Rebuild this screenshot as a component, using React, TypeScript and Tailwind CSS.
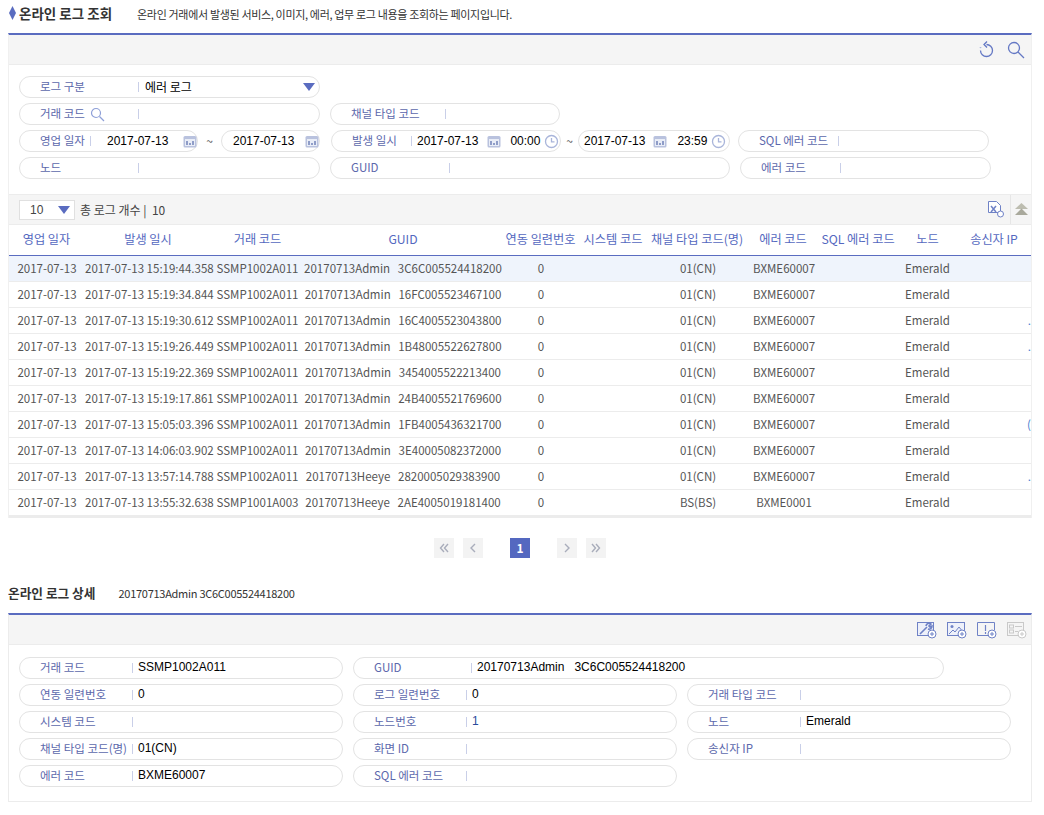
const KR = "font-['Noto_Sans_CJK_KR','Noto_Sans',sans-serif]";
const ARIAL = "font-['Liberation_Sans','Noto_Sans_CJK_KR',sans-serif]";

const rows = [
  ['2017-07-13 15:19:44.358', 'SSMP1002A011', '20170713Admin   3C6C005524418200', '01(CN)', 'BXME60007', ''],
  ['2017-07-13 15:19:34.844', 'SSMP1002A011', '20170713Admin   16FC005523467100', '01(CN)', 'BXME60007', ''],
  ['2017-07-13 15:19:30.612', 'SSMP1002A011', '20170713Admin   16C4005523043800', '01(CN)', 'BXME60007', '.'],
  ['2017-07-13 15:19:26.449', 'SSMP1002A011', '20170713Admin   1B48005522627800', '01(CN)', 'BXME60007', '.'],
  ['2017-07-13 15:19:22.369', 'SSMP1002A011', '20170713Admin   3454005522213400', '01(CN)', 'BXME60007', ''],
  ['2017-07-13 15:19:17.861', 'SSMP1002A011', '20170713Admin   24B4005521769600', '01(CN)', 'BXME60007', ''],
  ['2017-07-13 15:05:03.396', 'SSMP1002A011', '20170713Admin   1FB4005436321700', '01(CN)', 'BXME60007', '('],
  ['2017-07-13 14:06:03.902', 'SSMP1002A011', '20170713Admin   3E40005082372000', '01(CN)', 'BXME60007', ''],
  ['2017-07-13 13:57:14.788', 'SSMP1002A011', '20170713Heeye   2820005029383900', '01(CN)', 'BXME60007', '.'],
  ['2017-07-13 13:55:32.638', 'SSMP1001A003', '20170713Heeye   2AE4005019181400', 'BS(BS)', 'BXME0001', ''],
];

const heads: [string, string][] = [
  ['영업 일자', 'w-[75px]'],
  ['발생 일시', 'w-[128px]'],
  ['거래 코드', 'w-[91px]'],
  ['GUID', 'w-[200px]'],
  ['연동 일련번호', 'w-[75px]'],
  ['시스템 코드', 'w-[70px]'],
  ['채널 타입 코드(명)', 'w-[98px]'],
  ['에러 코드', 'w-[74px]'],
  ['SQL 에러 코드', 'w-[76px]'],
  ['노드', 'w-[63px]'],
  ['송신자 IP', 'w-[70px]'],
];

function Calendar() {
  return (
    <svg width="14" height="13" viewBox="0 0 14 13" className="shrink-0">
      <rect x="0.5" y="1" width="13" height="11.5" rx="1.5" fill="#b9c2de" />
      <rect x="2" y="4" width="10" height="7" fill="#e9edf7" />
      <rect x="3" y="6" width="2" height="4" fill="#8f9dc8" />
      <rect x="6" y="8" width="2" height="2" fill="#8f9dc8" />
      <rect x="9" y="6" width="2" height="4" fill="#8f9dc8" />
    </svg>
  );
}

function Clock() {
  return (
    <svg width="15" height="15" viewBox="0 0 15 15" className="shrink-0" fill="none" stroke="#a9b5da" strokeWidth="1.3">
      <circle cx="7.5" cy="7.5" r="6" />
      <path d="M7.5 4v3.8h3" />
    </svg>
  );
}

function Pill({ label, value, w, bar, blue, labelIcon, children }: { label: string; value?: string; w: string; bar: string; blue?: boolean; labelIcon?: React.ReactNode; children?: React.ReactNode }) {
  return (
    <div className={`${w} h-[22px] shrink-0 flex items-center rounded-full border border-[#e3e3e3] bg-white pl-[20px]`}>
      <span className={`${bar} shrink-0 flex items-center whitespace-nowrap text-[11.5px] text-[#5c68ac] ${KR}`}>
        {label}
        {labelIcon}
      </span>
      <span className="w-px h-[10px] bg-[#c9cfe8] shrink-0" />
      {value !== undefined && (
        <span className={`pl-[5px] mb-[2px] text-xs whitespace-pre ${blue ? 'text-[#2a4a9c]' : 'text-black'} ${ARIAL}`}>{value}</span>
      )}
      {children}
    </div>
  );
}

function Diamond() {
  return (
    <svg width="7" height="14" viewBox="0 0 7 14" className="shrink-0 mt-[1px] ml-px">
      <path d="M3.5 0 7 7l-3.5 7L0 7z" fill="#5a6cc0" />
    </svg>
  );
}

function PlusBadge({ cx, cy, color }: { cx: number; cy: number; color: string }) {
  return (
    <g>
      <circle cx={cx} cy={cy} r="4" fill="#fff" stroke={color} strokeWidth="1" />
      <path d={`M${cx - 2} ${cy}h4M${cx} ${cy - 2}v4`} stroke={color} strokeWidth="1" />
    </g>
  );
}

function DetailIcons() {
  const c = '#6f82c6';
  const g = '#c9c9c9';
  return (
    <div className="flex items-center gap-[10px]">
      <svg width="20" height="18" viewBox="0 0 20 18" fill="none">
        <rect x="0.5" y="1.5" width="16" height="13" stroke={c} fill="#eef1fa" />
        <path d="M3 13l7-7M9 5a3 3 0 0 1 5-2l-2 2 1 1 2-1a3 3 0 0 1-4 3" stroke={c} strokeWidth="1.6" />
        <PlusBadge cx={15} cy={13} color={c} />
      </svg>
      <svg width="20" height="18" viewBox="0 0 20 18" fill="none">
        <rect x="0.5" y="1.5" width="17" height="13" stroke={c} fill="#eef1fa" />
        <circle cx="5" cy="5.5" r="1.5" fill={c} />
        <path d="M2 13l4-4 2 2 4-5 4 5" stroke={c} />
        <PlusBadge cx={15} cy={13} color={c} />
      </svg>
      <svg width="20" height="18" viewBox="0 0 20 18" fill="none">
        <path d="M11 14.5H.5v-13h17V9" stroke={c} />
        <path d="M8.5 4v6M8.5 11v2" stroke={c} strokeWidth="1.2" />
        <PlusBadge cx={15} cy={13} color={c} />
      </svg>
      <svg width="20" height="18" viewBox="0 0 20 18" fill="none">
        <rect x="0.5" y="1.5" width="16" height="13" stroke={g} fill="#f5f5f5" />
        <rect x="2.5" y="4" width="4" height="3" stroke={g} />
        <rect x="2.5" y="9" width="4" height="3" stroke={g} />
        <path d="M8 5.5h7M8 10.5h3" stroke={g} />
        <PlusBadge cx={15} cy={13} color={g} />
      </svg>
    </div>
  );
}

function PageBtn({ d }: { d: string }) {
  return (
    <div className="w-5 h-5 bg-[#f3f3f3] flex items-center justify-center">
      <svg width="12" height="12" viewBox="0 0 12 12" fill="none" stroke="#a9adbb" strokeWidth="1.4">
        <path d={d} />
      </svg>
    </div>
  );
}

const dateText = `shrink-0 whitespace-nowrap text-xs text-black ${ARIAL}`;

export default function App() {
  return (
    <div className={`w-[1044px] h-[815px] overflow-hidden bg-white pl-2 pr-3 ${KR}`}>
      <div className="h-[33px] flex items-start pt-[5px]">
        <Diamond />
        <h1 className="ml-[3px] text-[13.5px] leading-[17px] font-bold text-[#333]">온라인 로그 조회</h1>
        <p className="ml-[25px] text-[11px] leading-[19px] text-[#333] tracking-[-0.33px]">온라인 거래에서 발생된 서비스, 이미지, 에러, 업무 로그 내용을 조회하는 페이지입니다.</p>
      </div>

      <section className="border-t-2 border-[#5a6cc0] border-x border-x-[#f0f0f0]">
        <div className="h-[30px] bg-[#f5f5f5] border-b border-[#ececec] flex items-center justify-end gap-3 pr-[6px]">
          <svg width="18" height="20" viewBox="0 0 18 20" fill="none" stroke="#6478c4" strokeWidth="1.3">
            <path d="M9.500 4.500a6 6 0 1 1-6 6" />
            <path d="M10 1.500 7 4.500l3 3" />
            <path d="M3.500 7.500v.6" strokeWidth="1.6" />
          </svg>
          <svg width="18" height="18" viewBox="0 0 18 18" fill="none" stroke="#6478c4" strokeWidth="1.3">
            <circle cx="7" cy="7" r="5.5" />
            <path d="M11 11l6 6" />
          </svg>
        </div>

        <div className="h-[129px] pt-[11px] pl-[10px] flex flex-col gap-[5px]">
          <div className="flex">
            <Pill label="로그 구분" w="w-[301px]" bar="w-[98px]">
              <span className="pl-[6px] text-xs text-black">에러 로그</span>
              <span className="ml-auto mr-[4px] w-0 h-0 border-x-[6px] border-x-transparent border-t-[8px] border-t-[#5a6cc0]" />
            </Pill>
          </div>
          <div className="flex gap-[10px]">
            <Pill
              label="거래 코드"
              w="w-[301px]"
              bar="w-[98px]"
              labelIcon={
                <svg width="15" height="15" viewBox="0 0 15 15" fill="none" stroke="#8fa0d8" strokeWidth="1.2" className="ml-[5px]">
                  <circle cx="6" cy="6" r="4.5" />
                  <path d="M9.500 9.500 14 14" />
                </svg>
              }
            />
            <Pill label="채널 타입 코드" w="w-[230px]" bar="w-[94px]" />
          </div>
          <div className="flex items-center">
            <Pill label="영업 일자" w="w-[179px]" bar="w-[50px]">
              <span className={`ml-[16px] ${dateText}`}>2017-07-13</span>
              <span className="ml-[15px]"><Calendar /></span>
            </Pill>
            <span className="w-[23px] text-center text-xs text-[#555]">~</span>
            <div className="w-[99px] h-[22px] shrink-0 flex items-center rounded-full border border-[#e3e3e3] pl-[11px]">
              <span className={dateText}>2017-07-13</span>
              <span className="ml-[11px]"><Calendar /></span>
            </div>
            <div className="ml-[11px] w-[230px] h-[22px] shrink-0 flex items-center rounded-full border border-[#e3e3e3] pl-[20px]">
              <span className="w-[59px] shrink-0 text-[11.5px] text-[#5c68ac]">발생 일시</span>
              <span className="w-px h-[10px] bg-[#c9cfe8] shrink-0" />
              <span className={`ml-[5px] ${dateText}`}>2017-07-13</span>
              <span className="ml-[9px]"><Calendar /></span>
              <span className={`ml-[9px] ${dateText}`}>00:00</span>
              <span className="ml-[4px]"><Clock /></span>
            </div>
            <span className="w-[17px] text-center text-xs text-[#555]">~</span>
            <div className="w-[152px] h-[22px] shrink-0 flex items-center rounded-full border border-[#e3e3e3] pl-[5px]">
              <span className={dateText}>2017-07-13</span>
              <span className="ml-[8px]"><Calendar /></span>
              <span className={`ml-[10px] ${dateText}`}>23:59</span>
              <span className="ml-[4px]"><Clock /></span>
            </div>
            <div className="ml-2">
              <Pill label="SQL 에러 코드" w="w-[251px]" bar="w-[79px]" />
            </div>
          </div>
          <div className="flex">
            <Pill label="노드" w="w-[301px]" bar="w-[98px]" />
            <div className="ml-[10px]">
              <Pill label="GUID" w="w-[400px]" bar="w-[98px]" />
            </div>
            <div className="ml-[10px]">
              <Pill label="에러 코드" w="w-[251px]" bar="w-[79px]" />
            </div>
          </div>
        </div>

        <div className="h-[31px] bg-[#f5f5f5] border-y border-[#ececec] flex items-center pl-[10px]">
          <div className={`w-[56px] h-[20px] bg-white border border-[#e0e0e0] flex items-center pl-[10px] text-xs text-[#444] ${ARIAL}`}>
            10
            <span className="ml-auto mr-[4px] w-0 h-0 border-x-[6px] border-x-transparent border-t-[8px] border-t-[#5a6cc0]" />
          </div>
          <span className="ml-[5px] pt-[1px] text-xs text-[#444] whitespace-pre">총 로그 개수 |  10</span>
          <div className="ml-auto flex h-full items-center">
            <svg width="16" height="17" viewBox="0 0 16 17" fill="none" stroke="#6f82c6" className="mr-[6px]">
              <path d="M.5.5h8l4 4v7H.5z" fill="#fff" />
              <path d="M3 5l5 6M8 5l-5 6" strokeWidth="1.5" />
              <circle cx="12.5" cy="13" r="3" fill="#fff" />
            </svg>
            <div className="w-[21px] h-full border-l border-[#e6e6e6] flex items-center justify-center">
              <svg width="13" height="13" viewBox="0 0 13 13">
                <path d="M6.500 0 13 6H0z" fill="#bdbdb0" />
                <path d="M6.500 5.500 13 12H0z" fill="#a9a99c" />
              </svg>
            </div>
          </div>
        </div>

        <div className="h-[31px] pb-[2px] flex items-center border-b-[1px] border-[#5a6cc0]">
          {heads.map(([h, w]) => (
            <div key={h} className={`${w} shrink-0 text-center whitespace-nowrap text-[12.2px] text-[#5468c0]`}>{h}</div>
          ))}
        </div>

        <div className="h-[262px] overflow-hidden border-b-2 border-[#ececec]">
          {rows.map((r, i) => (
            <div key={i} className={`h-[26px] pt-[1px] flex items-center border-b border-[#ececec] text-[11.5px] text-[#555] whitespace-pre ${i === 0 ? 'bg-[#eff4fc]' : ''}`}>
              <div className="w-[76px] shrink-0 text-center">2017-07-13</div>
              <div className="w-[127px] shrink-0 text-center">{r[0]}</div>
              <div className="w-[91px] shrink-0 text-center">{r[1]}</div>
              <div className="w-[200px] shrink-0 text-center">{r[2]}</div>
              <div className="w-[76px] shrink-0 text-center">0</div>
              <div className="w-[70px] shrink-0" />
              <div className="w-[98px] shrink-0 text-center">{r[3]}</div>
              <div className="w-[74px] shrink-0 text-center">{r[4]}</div>
              <div className="w-[75px] shrink-0" />
              <div className="w-[63px] shrink-0 text-center">Emerald</div>
              <div className="w-[72px] shrink-0 text-right text-[#4a7fd0]">{r[5]}</div>
            </div>
          ))}
        </div>
      </section>

      <div className="mt-[20px] flex items-center justify-center gap-[9px]">
        <PageBtn d="M6 2 2.500 6 6 10M10 2 6.500 6l3.500 4" />
        <PageBtn d="M8 2 4 6l4 4" />
        <div className="mx-[18px] w-5 h-5 bg-[#5468c0] text-white text-xs font-bold flex items-center justify-center">1</div>
        <PageBtn d="M4 2l4 4-4 4" />
        <PageBtn d="M2 2l3.500 4L2 10M6 2l3.500 4L6 10" />
      </div>

      <div className="mt-[25px] h-[30px] flex items-start">
        <h2 className="text-[12.7px] leading-5 font-bold text-[#333]">온라인 로그 상세</h2>
        <span className="ml-[23px] text-[11px] leading-5 text-[#333] tracking-[-0.27px]">20170713Admin 3C6C005524418200</span>
      </div>

      <section className="border-t-2 border-[#5a6cc0] border-x border-b border-x-[#ececec] border-b-[#ececec]">
        <div className="h-[30px] bg-[#f5f5f5] border-b border-[#ececec] flex items-center justify-end pr-[4px]">
          <DetailIcons />
        </div>
        <div className="h-[156px] pt-[12px] pl-[10px] flex flex-col gap-[5px]">
          <div className="flex gap-[10px]">
            <Pill label="거래 코드" value="SSMP1002A011" w="w-[324px]" bar="w-[92px]" />
            <Pill label="GUID" value="20170713Admin   3C6C005524418200" w="w-[591px]" bar="w-[97px]" />
          </div>
          <div className="flex gap-[10px]">
            <Pill label="연동 일련번호" value="0" w="w-[324px]" bar="w-[92px]" />
            <Pill label="로그 일련번호" value="0" w="w-[324px]" bar="w-[92px]" />
            <Pill label="거래 타입 코드" w="w-[324px]" bar="w-[92px]" />
          </div>
          <div className="flex gap-[10px]">
            <Pill label="시스템 코드" w="w-[324px]" bar="w-[92px]" />
            <Pill label="노드번호" value="1" blue w="w-[324px]" bar="w-[92px]" />
            <Pill label="노드" value="Emerald" w="w-[324px]" bar="w-[92px]" />
          </div>
          <div className="flex gap-[10px]">
            <Pill label="채널 타입 코드(명)" value="01(CN)" w="w-[324px]" bar="w-[92px]" />
            <Pill label="화면 ID" w="w-[324px]" bar="w-[92px]" />
            <Pill label="송신자 IP" w="w-[324px]" bar="w-[92px]" />
          </div>
          <div className="flex gap-[10px]">
            <Pill label="에러 코드" value="BXME60007" w="w-[324px]" bar="w-[92px]" />
            <Pill label="SQL 에러 코드" w="w-[324px]" bar="w-[92px]" />
          </div>
        </div>
      </section>
    </div>
  );
}
